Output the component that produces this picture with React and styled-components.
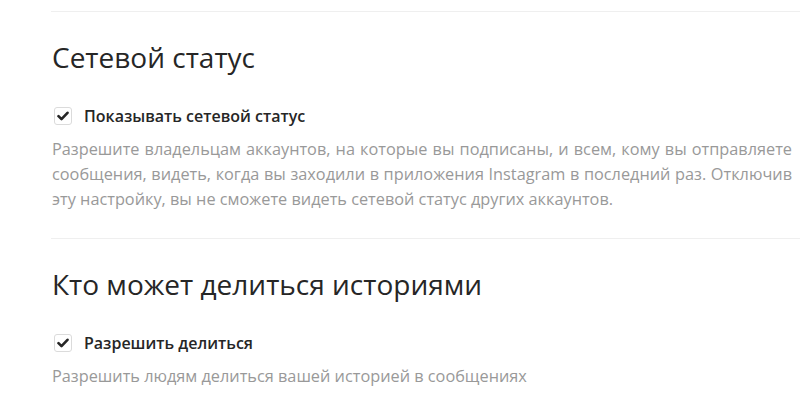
import React from 'react'
import styled, { createGlobalStyle } from 'styled-components'

const Global = createGlobalStyle`
  html, body { margin:0; padding:0; background:#fff; }
  body { font-family:"Open Sans", "Noto Sans", sans-serif; color:#262626; }
`
const Page = styled.div`
  padding:11px 0 0 51px; width:800px; box-sizing:border-box; overflow:hidden;
`
const Section = styled.section`
  border-top:1px solid #efefef; padding:28px 0 26px 1px;
`
const Heading = styled.h2`
  margin:0 0 32px 0; font-size:28px; font-weight:400; line-height:34px; color:#262626;
`
const CheckRow = styled.label`
  display:flex; align-items:center; gap:12px; margin-left:2px; margin-bottom:11px; cursor:pointer;
`
const Box = styled.span`
  width:18px; height:18px; box-sizing:border-box; border:1px solid #dbdbdb; border-radius:3px;
  display:flex; align-items:center; justify-content:center; background:#fff;
`
const Label = styled.span`
  font-size:16px; font-weight:600; line-height:20px; color:#262626;
`
const Desc = styled.p`
  margin:0; font-size:16.3px; line-height:25px; color:#999; max-width:740px; text-align:justify;
`

function Check(){
  return (
    <Box>
      <svg width="12" height="10" viewBox="0 0 12 10">
        <path d="M1.5 5.2 L4.5 8.2 L10.5 1.8" fill="none" stroke="#262626" strokeWidth="2.6" strokeLinecap="round" strokeLinejoin="round"/>
      </svg>
    </Box>
  )
}

export default function App(){
  return (
    <Page>
      <Global />
      <Section>
        <Heading>Сетевой статус</Heading>
        <CheckRow><Check /><Label>Показывать сетевой статус</Label></CheckRow>
        <Desc>Разрешите владельцам аккаунтов, на которые вы подписаны, и всем, кому вы отправляете сообщения, видеть, когда вы заходили в приложения Instagram в последний раз. Отключив эту настройку, вы не сможете видеть сетевой статус других аккаунтов.</Desc>
      </Section>
      <Section>
        <Heading>Кто может делиться историями</Heading>
        <CheckRow><Check /><Label>Разрешить делиться</Label></CheckRow>
        <Desc>Разрешить людям делиться вашей историей в сообщениях</Desc>
      </Section>
    </Page>
  )
}
